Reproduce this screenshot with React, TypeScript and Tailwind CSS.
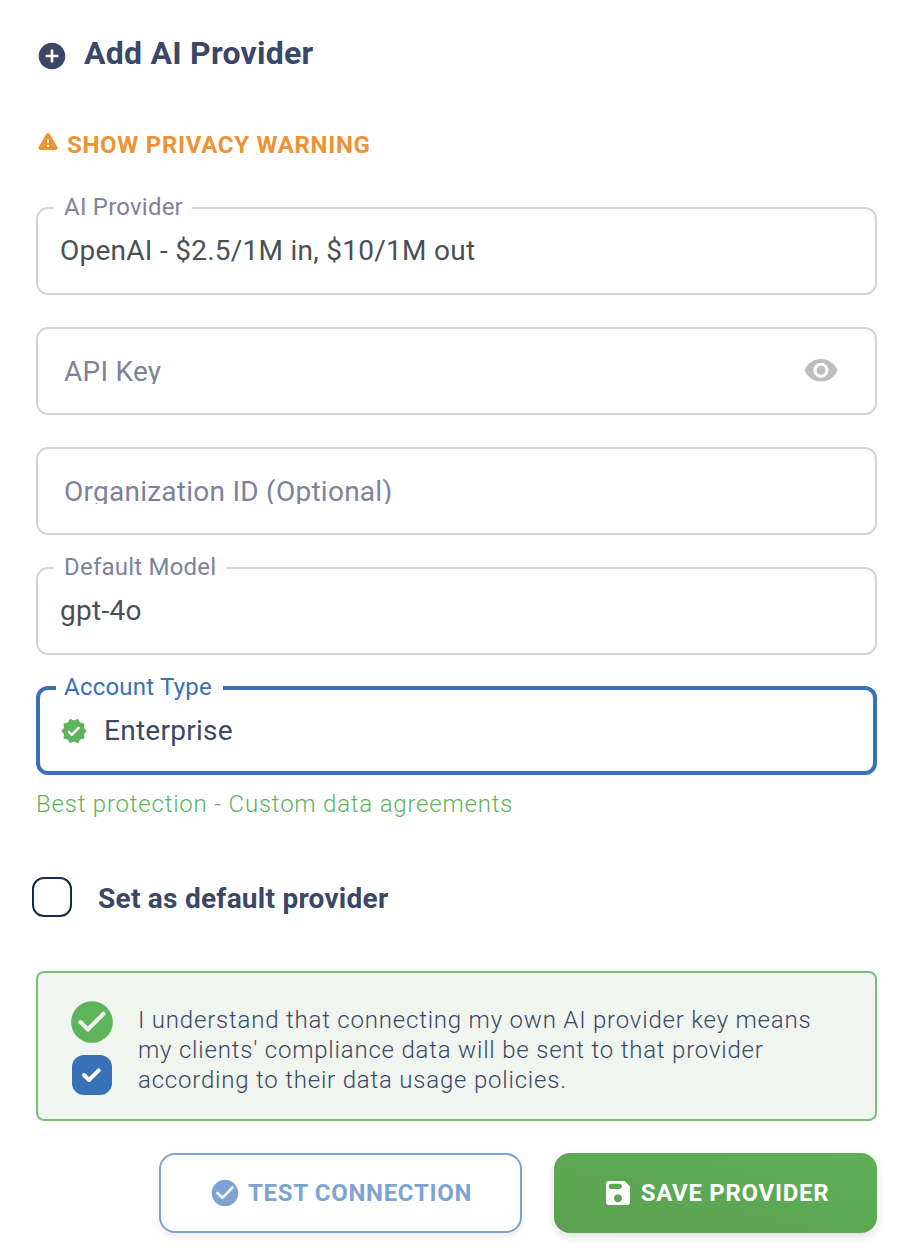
import React, { useState } from 'react';

const icons = {
  add: 'M12 2C6.48 2 2 6.48 2 12s4.48 10 10 10 10-4.48 10-10S17.52 2 12 2zm4 11h-3v3c0 .55-.45 1-1 1s-1-.45-1-1v-3H8c-.55 0-1-.45-1-1s.45-1 1-1h3V8c0-.55.45-1 1-1s1 .45 1 1v3h3c.55 0 1 .45 1 1s-.45 1-1 1z',
  warning: 'M4.47 21h15.06c1.54 0 2.5-1.67 1.73-3L13.73 4.99c-.77-1.33-2.69-1.33-3.46 0L2.74 18c-.77 1.33.19 3 1.73 3zM12 14c-.55 0-1-.45-1-1v-2c0-.55.45-1 1-1s1 .45 1 1v2c0 .55-.45 1-1 1zm1 4h-2v-2h2v2z',
  eye: 'M12 4C7 4 2.73 7.11 1 11.5 2.73 15.89 7 19 12 19s9.27-3.11 11-7.5C21.27 7.11 17 4 12 4zm0 12.5c-2.76 0-5-2.24-5-5s2.24-5 5-5 5 2.24 5 5-2.24 5-5 5zm0-8c-1.66 0-3 1.34-3 3s1.34 3 3 3 3-1.34 3-3-1.34-3-3-3z',
  checkCircle: 'M12 2C6.48 2 2 6.48 2 12s4.48 10 10 10 10-4.48 10-10S17.52 2 12 2zM9.29 16.29L5.7 12.7c-.39-.39-.39-1.02 0-1.41s1.02-.39 1.41 0L10 14.17l6.88-6.88c.39-.39 1.02-.39 1.41 0s.39 1.02 0 1.41l-7.59 7.59c-.38.39-1.02.39-1.41 0z',
  save: 'M17.59 3.59c-.38-.38-.89-.59-1.42-.59H5c-1.11 0-2 .9-2 2v14c0 1.1.9 2 2 2h14c1.1 0 2-.9 2-2V7.83c0-.53-.21-1.04-.59-1.41l-2.82-2.83zM12 19c-1.66 0-3-1.34-3-3s1.34-3 3-3 3 1.34 3 3-1.34 3-3 3zm1-10H7c-1.1 0-2-.9-2-2s.9-2 2-2h6c1.1 0 2 .9 2 2s-.9 2-2 2z',
  verified: 'M23 12l-2.44-2.79.34-3.69-3.61-.82-1.89-3.2L12 2.96 8.6 1.5 6.71 4.69 3.1 5.5l.34 3.7L1 12l2.44 2.79-.34 3.7 3.61.82L8.6 22.5l3.4-1.47 3.4 1.46 1.89-3.19 3.61-.82-.34-3.69L23 12zM9.38 16.01L7 13.61c-.39-.39-.39-1.02 0-1.41l.07-.07c.39-.39 1.03-.39 1.42 0l1.61 1.62 5.15-5.16c.39-.39 1.03-.39 1.42 0l.07.07c.39.39.39 1.02 0 1.41l-5.92 5.94c-.41.39-1.04.39-1.44 0z',
};

const Icon: React.FC<{ name: keyof typeof icons; className: string }> = ({ name, className }) => (
  <svg viewBox="0 0 24 24" fill="currentColor" className={`shrink-0 ${className}`}>
    <path d={icons[name]} />
  </svg>
);

interface FieldProps {
  label: string;
  value?: string;
  focused?: boolean;
  icon?: React.ReactNode;
  trailing?: React.ReactNode;
  labelClass?: string;
}

const Field: React.FC<FieldProps> = ({ label, value, focused, icon, trailing, labelClass = '' }) => {
  const frame = focused
    ? '-mt-px h-[89px] border-4 border-[#3871b8] px-[20px] pt-px'
    : 'h-22 border-2 border-[#d1d5db] px-[22px]';
  return (
    <div className={`relative flex items-center rounded-xl ${frame}`}>
      {value && (
        <span className={`absolute left-[16px] h-8 bg-white text-2xl leading-8 tracking-[0.22px] whitespace-nowrap ${focused ? '-top-[19px] pl-2 text-[#3871b8]' : '-top-[18px] pl-[10px] text-[#7e829c]'} ${labelClass}`}>
          {label}
        </span>
      )}
      {icon}
      {value ? (
        <span className={`text-[28px] leading-8 tracking-[0.26px] ${focused ? 'ml-4 text-[#3a4766]' : 'text-[#4b4f56]'}`}>{value}</span>
      ) : (
        <span className="-mt-[3px] ml-1 h-[28px] flex-1 overflow-hidden text-[28px] leading-[32px] tracking-[0.25px] text-[#7e829c]">{label}</span>
      )}
      {trailing}
    </div>
  );
};

export default function App() {
  const [isDefault, setIsDefault] = useState(false);

  return (
    <div className="h-[1260px] w-[910px] overflow-hidden bg-white pl-9 pr-[33px] pt-9 font-['Roboto',sans-serif] text-[#3a4766]">
      <h1 className="flex h-9 items-center text-[32px] font-bold leading-9 tracking-[0.25px]">
        <Icon name="add" className="mt-1 mr-4 size-8" />
        <span className="-mt-0.5">Add AI Provider</span>
      </h1>

      <button className="mt-[57px] flex h-8 items-center text-2xl font-bold leading-8 tracking-[0.7px] text-[#ed9333]">
        <Icon name="warning" className="mr-[7px] -mt-2 size-6" />
        SHOW PRIVACY WARNING
      </button>

      <div className="mt-[46px] flex flex-col gap-8">
        <Field label="AI Provider" value="OpenAI - $2.5/1M in, $10/1M out" labelClass="w-[138px]" />
        <Field label="API Key" trailing={<Icon name="eye" className="mr-[14px] size-9 text-[#bdbdbd]" />} />
        <Field label="Organization ID (Optional)" />
        <Field label="Default Model" value="gpt-4o" labelClass="w-[172px]" />
        <Field
          focused
          label="Account Type"
          value="Enterprise"
          labelClass="w-[167px]"
          icon={<Icon name="verified" className="size-7 text-[#5db45a]" />}
        />
      </div>
      <p className="mt-[13px] text-2xl font-light leading-8 tracking-[0.79px] text-[#5db45a]">
        Best protection - Custom data agreements
      </p>

      <label className="mt-[57px] -ml-1 flex h-10 items-center">
        <input
          type="checkbox"
          checked={isDefault}
          onChange={() => setIsDefault(!isDefault)}
          className="size-10 appearance-none rounded-xl border-2 border-[#132b4c] bg-white"
        />
        <span className="ml-[26px] mt-1 text-[28px] font-bold leading-8 tracking-[0.26px]">Set as default provider</span>
      </label>

      <div className="mt-[54px] flex h-[150px] rounded-lg border-2 border-[#76c179] bg-[#f0f5ef] pl-[29px] pt-[24px]">
        <div className="flex w-[50px] flex-col items-center">
          <Icon name="checkCircle" className="size-[50px] text-[#5db45a]" />
          <span className="mt-2 flex size-10 items-center justify-center rounded-xl bg-[#3871b8]">
            <svg viewBox="0 0 24 24" className="size-6" fill="none" stroke="white" strokeWidth="4" strokeLinecap="round" strokeLinejoin="round">
              <path d="M4 12l5 5L18.7 7.3" />
            </svg>
          </span>
        </div>
        <p className="ml-[21px] mt-2 text-2xl font-light leading-[30px] tracking-[0.8px]">
          I understand that connecting my own AI provider key means
          <br />
          my clients' compliance data will be sent to that provider
          <br />
          according to their data usage policies.
        </p>
      </div>

      <div className="mt-8 flex justify-end gap-8 text-2xl font-bold tracking-[0.7px]">
        <button className="flex h-20 w-[363px] items-center justify-center rounded-2xl border-2 border-[#7ea3d3] bg-white text-[#7ea3d3] shadow-[0_4px_8px_rgba(0,0,0,0.08)]">
          <Icon name="checkCircle" className="mr-[7px] size-8" />
          TEST CONNECTION
        </button>
        <button className="flex h-20 w-[323px] items-center justify-center rounded-2xl bg-linear-to-tr from-[#5b9f50] to-[#5fb058] text-white shadow-[0_4px_8px_rgba(0,0,0,0.12)]">
          <Icon name="save" className="mr-[7px] size-8" />
          SAVE PROVIDER
        </button>
      </div>
    </div>
  );
}
